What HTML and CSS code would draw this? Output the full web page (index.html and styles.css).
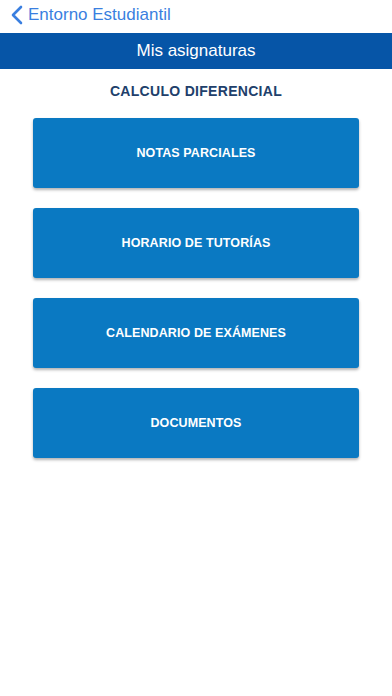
FILE: index.html
```html
<!DOCTYPE html>
<html>
<head>
    <meta charset="UTF-8">
    <title>Mis asignaturas</title>
    <link rel="stylesheet" href="styles.css">
</head>
<body>
    <div class="nav">
        <svg class="back-icon" width="12" height="20" viewBox="0 0 12 20">
            <path d="M10 2 L2 10 L10 18" fill="none" stroke="#3a7fe0" stroke-width="2.6" stroke-linecap="round" stroke-linejoin="round"/>
        </svg>
        <span class="back-label">Entorno Estudiantil</span>
    </div>

    <div class="title-bar">Mis asignaturas</div>

    <div class="subject">CALCULO DIFERENCIAL</div>

    <div class="menu">
        <button class="menu-btn">NOTAS PARCIALES</button>
        <button class="menu-btn">HORARIO DE TUTORÍAS</button>
        <button class="menu-btn">CALENDARIO DE EXÁMENES</button>
        <button class="menu-btn">DOCUMENTOS</button>
    </div>
</body>
</html>
```

FILE: styles.css
```css
* {
    margin: 0;
    padding: 0;
    box-sizing: border-box;
}

body {
    font-family: 'Helvetica Neue', 'Liberation Sans', Arial, sans-serif;
    background: #ffffff;
    width: 392px;
    height: 696px;
    overflow: hidden;
}

.nav {
    height: 33px;
    display: flex;
    align-items: center;
    padding-left: 11px;
    padding-bottom: 3px;
}

.back-icon {
    margin-right: 5px;
}

.back-label {
    font-size: 17px;
    color: #3a7fe0;
}

.title-bar {
    height: 36px;
    background: #0655a7;
    color: #ffffff;
    font-size: 17px;
    display: flex;
    align-items: center;
    justify-content: center;
}

.subject {
    height: 42px;
    display: flex;
    align-items: center;
    justify-content: center;
    padding-top: 1px;
    font-size: 14px;
    font-weight: bold;
    letter-spacing: 0.3px;
    color: #213f6b;
}

.menu {
    display: flex;
    flex-direction: column;
    gap: 20px;
    padding: 7px 33px 0 33px;
}

.menu-btn {
    height: 70px;
    width: 100%;
    background: #0a79c2;
    border: none;
    border-radius: 3px;
    box-shadow: 0 2px 3px rgba(0, 0, 0, 0.3);
    color: #ffffff;
    font-family: inherit;
    font-size: 12.5px;
    font-weight: bold;
    letter-spacing: 0.1px;
    cursor: pointer;
}
```
